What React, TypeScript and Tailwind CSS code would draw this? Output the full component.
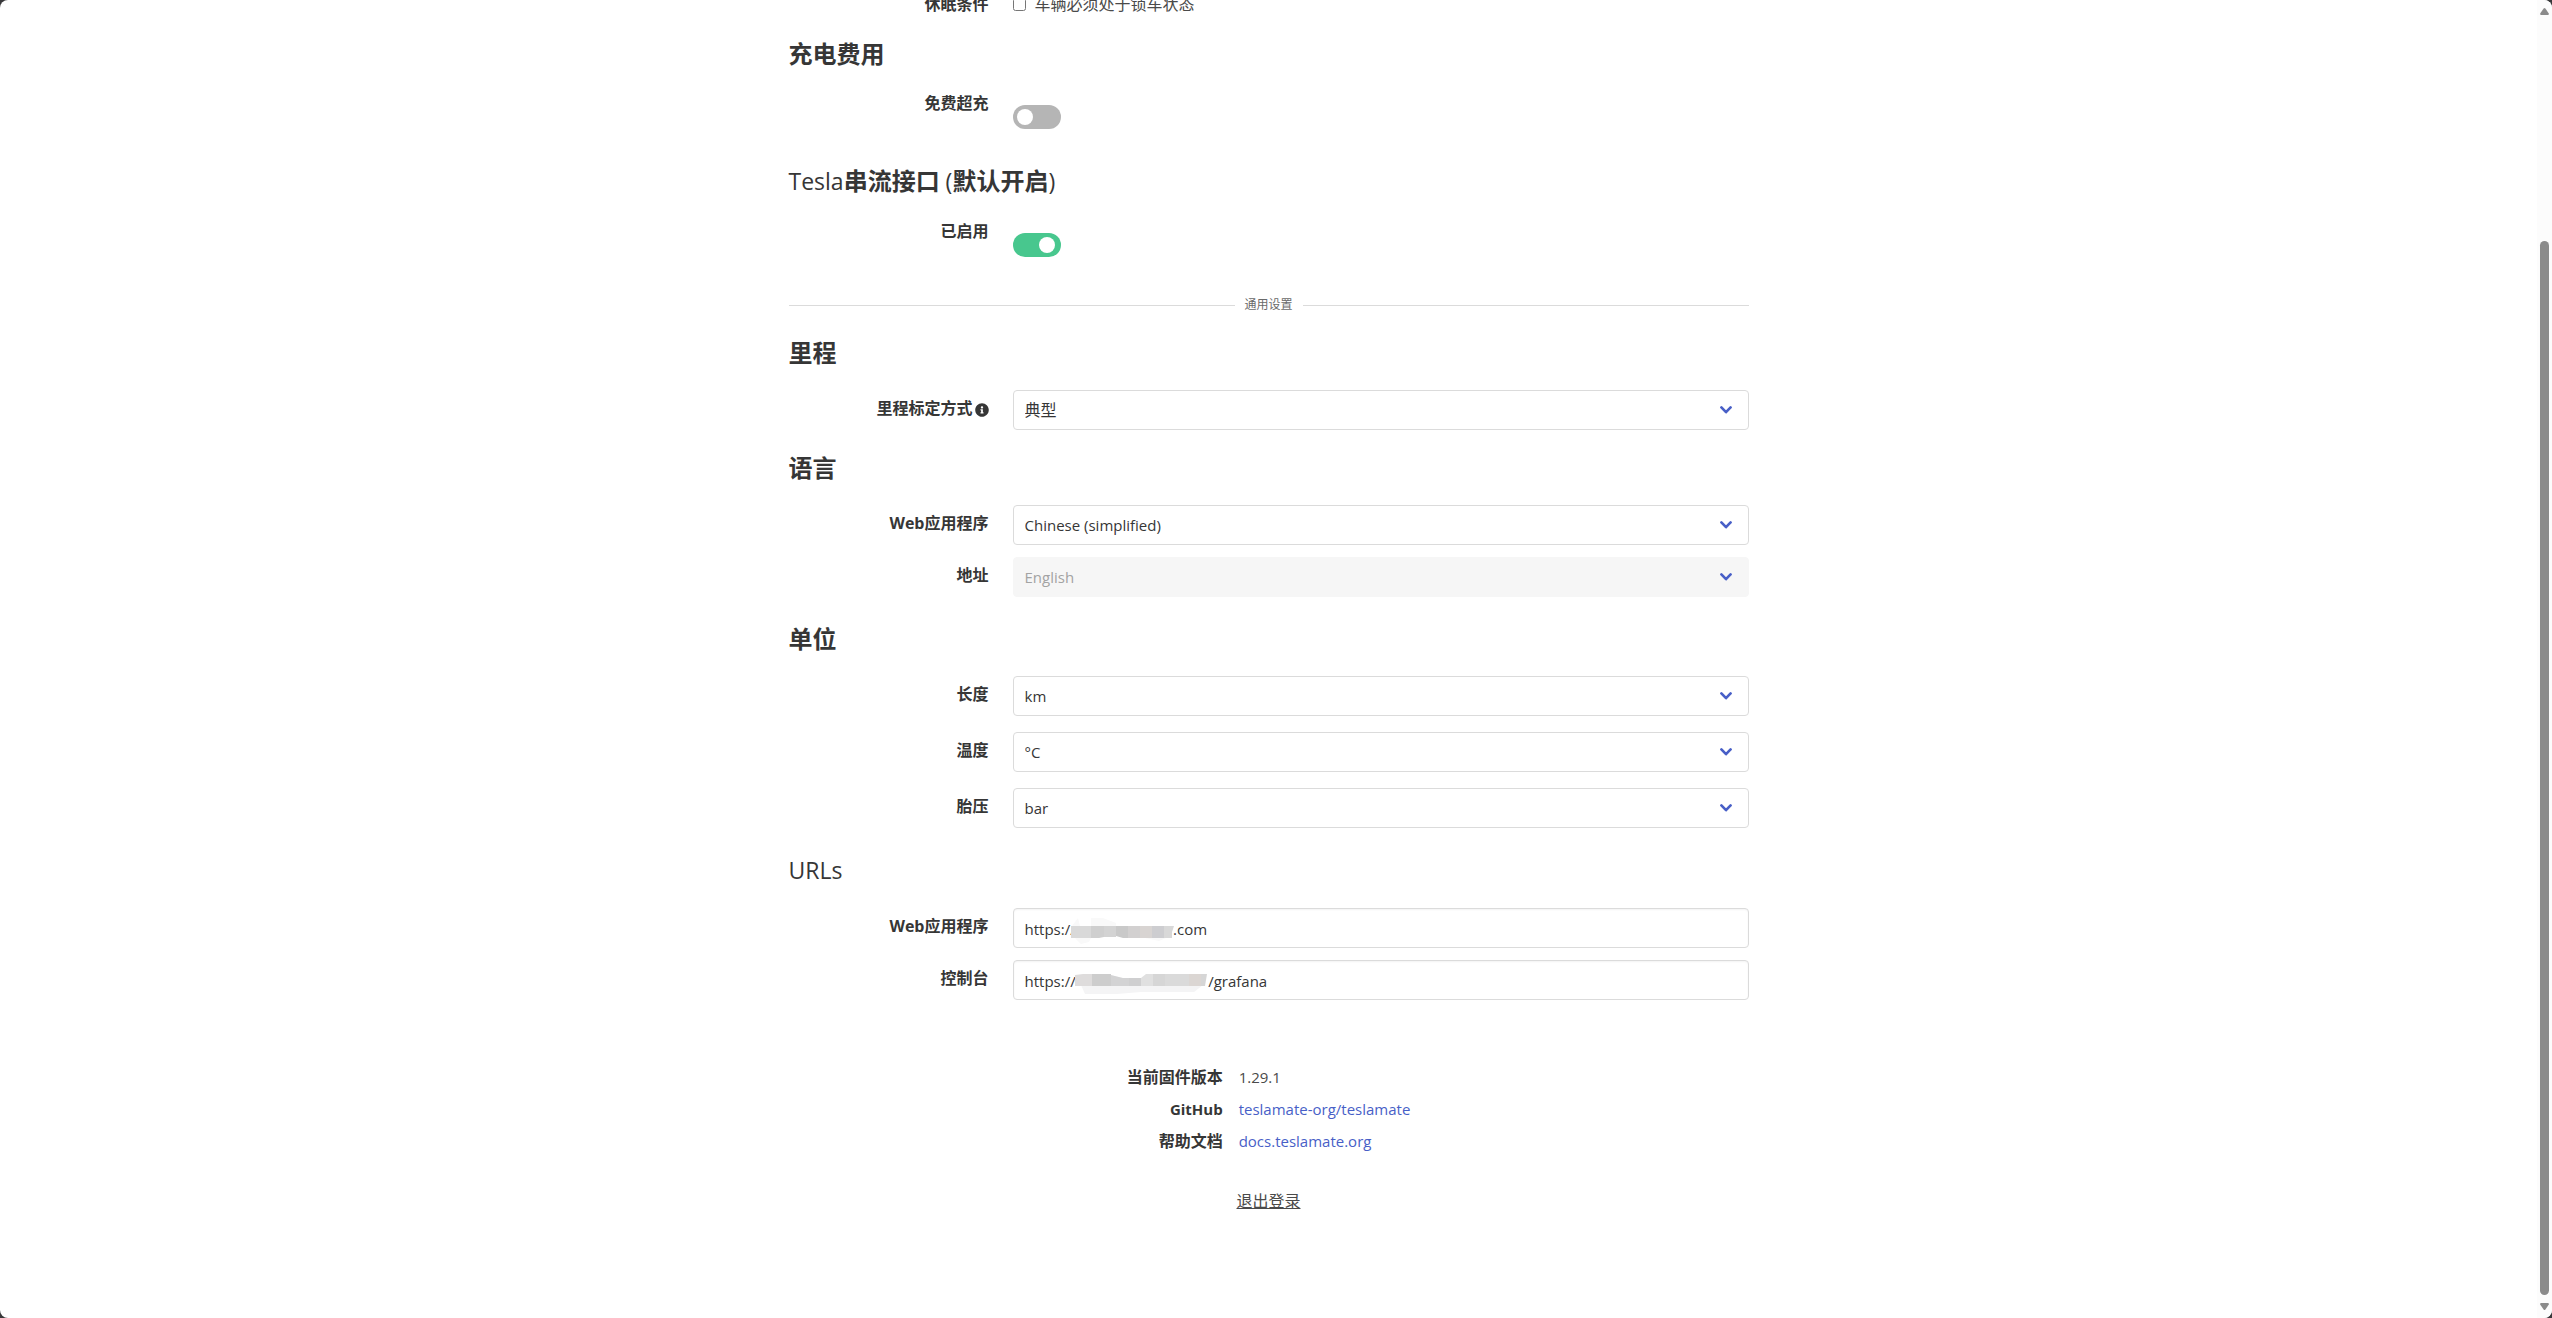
import React, { useState } from 'react';
import { FaInfoCircle } from 'react-icons/fa';

const space = (n: number) => '\u00a0'.repeat(n);

const Title = ({ children, className = 'mt-6' }: { children: React.ReactNode; className?: string }) => (
  <h2 className={`${className} mb-6 text-2xl leading-[27px] font-bold text-[#363636]`}>{children}</h2>
);

// Latin parts of a title are set lighter than the Chinese ones
const Latin = ({ children }: { children: React.ReactNode }) => (
  <span className="text-[23px] font-medium">{children}</span>
);

interface FieldProps {
  id: string;
  label: React.ReactNode;
  className?: string;
  children: React.ReactNode;
}

const Field = ({ id, label, className = '', children }: FieldProps) => (
  <div className={`flex ${className}`}>
    <div className="mr-6 w-[200px] shrink-0 pt-[6px] text-right">
      <label htmlFor={id} className="inline-flex items-center font-bold text-[#363636]">{label}</label>
    </div>
    <div className="relative flex-1">{children}</div>
  </div>
);

interface SelectFieldProps {
  id: string;
  label: React.ReactNode;
  options: string[];
  disabled?: boolean;
  className?: string;
  textSize?: string;
}

const SelectField = ({ id, label, options, disabled = false, className, textSize = 'text-[15px]' }: SelectFieldProps) => {
  const [value, setValue] = useState(options[0]);

  return (
    <Field id={id} label={label} className={className}>
      <select
        id={id}
        value={value}
        disabled={disabled}
        onChange={(e) => setValue(e.target.value)}
        className={`${textSize} block h-10 w-full appearance-none rounded border border-[#dbdbdb] bg-white pr-10 pl-[11px] text-[#363636] disabled:border-[#f6f6f6] disabled:bg-[#f6f6f6] disabled:text-[#a3a3a3] disabled:opacity-100`}
      >
        {options.map((option) => (
          <option key={option}>{option}</option>
        ))}
      </select>
      <svg
        viewBox="0 0 12 8"
        className="pointer-events-none absolute top-1/2 right-[17px] h-2 w-3 -translate-y-1/2"
        fill="none"
        stroke="#485fc7"
        strokeWidth="2.6"
        strokeLinecap="round"
        strokeLinejoin="round"
      >
        <path d="M1.4 1.4 L6 6.2 L10.6 1.4" />
      </svg>
    </Field>
  );
};

const SwitchField = ({ id, label, defaultOn = false }: { id: string; label: string; defaultOn?: boolean }) => {
  const [on, setOn] = useState(defaultOn);

  return (
    <div className="flex h-[52px]">
      <div className="mr-6 w-[200px] shrink-0 text-right">
        <label htmlFor={id} className="font-bold text-[#363636]">{label}</label>
      </div>
      <div className="flex-1 pt-[14px]">
        <input
          id={id}
          type="checkbox"
          role="switch"
          checked={on}
          onChange={(e) => setOn(e.target.checked)}
          className="block h-6 w-12 cursor-pointer appearance-none rounded-full bg-[#b5b5b5] p-1 before:block before:size-4 before:rounded-full before:bg-white checked:bg-[#48c78e] checked:before:translate-x-[22px]"
        />
      </div>
    </div>
  );
};

interface UrlFieldProps {
  id: string;
  label: string;
  initial: string;
  className?: string;
  children: React.ReactNode;
}

const UrlField = ({ id, label, initial, className, children }: UrlFieldProps) => {
  const [value, setValue] = useState(initial);

  return (
    <Field id={id} label={label} className={className}>
      <input
        id={id}
        type="text"
        value={value}
        onChange={(e) => setValue(e.target.value)}
        className="block h-10 w-full rounded border border-[#dbdbdb] bg-white px-[11px] pt-px text-[15px] text-[#363636] shadow-[inset_0_1px_2px_rgba(10,10,10,0.05)]"
      />
      {children}
    </Field>
  );
};

// Censored host names
const AppHostMask = () => (
  <svg viewBox="0 0 104 26" className="pointer-events-none absolute top-[10px] left-[58px] h-[26px] w-[104px]">
    <path d="M1 8 L7 0 L9 8 Z M20 0 L32 0 L45 5 L45 8 L20 8 Z M4 20 H20 L18 24 L10 26 Z M74 20 H95 L88 23 Z" fill="#f9f9f9" />
    <path d="M0 8 H20 V20 H0 Z" fill="#d9d9d9" />
    <path d="M20 8 H33 V19 L28 20 H20 Z" fill="#cfcfcf" />
    <path d="M33 8 H45 V19 H33 Z" fill="#d3d3d3" />
    <path d="M45 8 H57 V20 H52 L45 18 Z" fill="#c9c9c9" />
    <path d="M57 8 H69 V20 H57 Z" fill="#d2d0d0" />
    <path d="M69 8 H81 V20 H69 Z" fill="#d8d4d2" />
    <path d="M81 8 H93 V20 H81 Z" fill="#cdcdd0" />
    <path d="M93 8 H103 L101 14 V20 H93 Z" fill="#d8d8d8" />
  </svg>
);

const GrafanaHostMask = () => (
  <svg viewBox="0 0 134 22" className="pointer-events-none absolute top-[13px] left-[62px] h-[22px] w-[134px]">
    <path d="M6 12 H128 L119 19 H66 L42 21 H10 Z" fill="#f4f4f5" />
    <path d="M0 2 L8 1 H17 V13 H0 Z" fill="#dedcdc" />
    <path d="M17 1 H36 V13 H17 Z" fill="#cdcdcd" />
    <path d="M36 2 L48 5 H66 V13 H36 Z" fill="#d3d3d4" />
    <path d="M54 5 H66 V13 H54 Z" fill="#cfcfd0" />
    <path d="M66 5 L71 1 H78 V13 H66 Z" fill="#e0e0e0" />
    <path d="M78 1 H90 V13 H78 Z" fill="#d6d6d6" />
    <path d="M90 1 H114 V13 H90 Z" fill="#dadada" />
    <path d="M114 1 H126 V13 H114 Z" fill="#dbd6d3" />
    <path d="M126 1 H132 L130 13 H126 Z" fill="#d6d6d6" />
  </svg>
);

const Scrollbar = () => (
  <div className="flex w-[15px] shrink-0 flex-col items-center bg-[#fcfcfc] py-2">
    <svg viewBox="0 0 9 7" className="h-[7px] w-[9px]" fill="#8b8b8b">
      <path d="M3.6 0.6 Q4.5 -0.4 5.4 0.6 L8.8 5.4 Q9 7 8 7 H1 Q0 7 0.2 5.4 Z" />
    </svg>
    <div className="flex-[226]" />
    <div className="mb-2 w-[9px] flex-[1054] rounded-full bg-[#8b8b8b]" />
    <svg viewBox="0 0 9 7" className="h-[7px] w-[9px]" fill="#8b8b8b">
      <path d="M3.6 6.4 Q4.5 7.4 5.4 6.4 L8.8 1.6 Q9 0 8 0 H1 Q0 0 0.2 1.6 Z" />
    </svg>
  </div>
);

const App = () => {
  const [requireLocked, setRequireLocked] = useState(false);

  return (
    <div className="h-screen bg-[#38383a] font-['Open_Sans','Noto_Sans_CJK_SC',sans-serif] text-base leading-6 text-[#4a4a4a]">
      <div className="flex h-full overflow-hidden rounded-lg bg-white">
        <main className="min-w-0 flex-1">
          <div className="mx-auto max-w-[960px]">
            {/* Row scrolled partly out of view */}
            <div className="flex h-4 items-end overflow-hidden">
              <div className="mr-6 w-[200px] shrink-0 text-right font-bold text-[#363636]">休眠条件</div>
              <label className="flex items-center">
                <input
                  type="checkbox"
                  checked={requireLocked}
                  onChange={(e) => setRequireLocked(e.target.checked)}
                  className="mr-[9px] size-[13px]"
                />
                车辆必须处于锁车状态
              </label>
            </div>

            <Title>充电费用</Title>
            <SwitchField id="free_supercharging" label="免费超充" />

            <Title><Latin>Tesla</Latin>串流接口<Latin> (</Latin>默认开启<Latin>)</Latin></Title>
            <SwitchField id="use_streaming_api" label="已启用" defaultOn />

            <div className="mt-6 flex items-center gap-[10px] text-xs leading-5 text-[#6a6a6a]">
              <div className="h-px flex-1 bg-[#dbdbdb]" />
              通用设置
              <div className="h-px flex-1 bg-[#dbdbdb]" />
            </div>

            <Title>里程</Title>
            <SelectField
              id="preferred_range"
              label={<>里程标定方式<FaInfoCircle className="mt-1 ml-[2px] size-[14px]" /></>}
              options={['典型', '额定']}
              textSize="text-base"
            />

            <Title>语言</Title>
            <SelectField id="ui_language" label="Web应用程序" options={['Chinese (simplified)', 'English']} />
            <SelectField id="address_language" label="地址" options={['English']} disabled className="mt-3" />

            <Title className="mt-7">单位</Title>
            <SelectField id="unit_length" label="长度" options={['km', 'mi']} />
            <SelectField id="unit_temperature" label="温度" options={['°C', '°F']} className="mt-4" />
            <SelectField id="unit_pressure" label="胎压" options={['bar', 'psi']} className="mt-4" />

            <Title className="mt-7"><Latin>URLs</Latin></Title>
            <UrlField id="base_url" label="Web应用程序" initial={`https://${space(25)}.com`}>
              <AppHostMask />
            </UrlField>
            <UrlField id="grafana_url" label="控制台" initial={`https://${space(34)}/grafana`} className="mt-3">
              <GrafanaHostMask />
            </UrlField>

            <table className="mx-auto mt-[61px]">
              <tbody>
                <tr>
                  <th className="px-2 py-1 text-right font-bold text-[#363636]">当前固件版本</th>
                  <td className="px-2 py-1 text-[15px]">1.29.1</td>
                </tr>
                <tr>
                  <th className="px-2 py-1 text-right text-[15px] font-bold text-[#363636]">GitHub</th>
                  <td className="px-2 py-1 text-[15px]"><a href="#github" className="text-[#485fc7]">teslamate-org/teslamate</a></td>
                </tr>
                <tr>
                  <th className="px-2 py-1 text-right font-bold text-[#363636]">帮助文档</th>
                  <td className="px-2 py-1 text-[15px]"><a href="#docs" className="text-[#485fc7]">docs.teslamate.org</a></td>
                </tr>
              </tbody>
            </table>

            <div className="mt-8 text-center">
              <button type="button" className="cursor-pointer underline">退出登录</button>
            </div>
          </div>
        </main>
        <Scrollbar />
      </div>
    </div>
  );
};

export default App;
